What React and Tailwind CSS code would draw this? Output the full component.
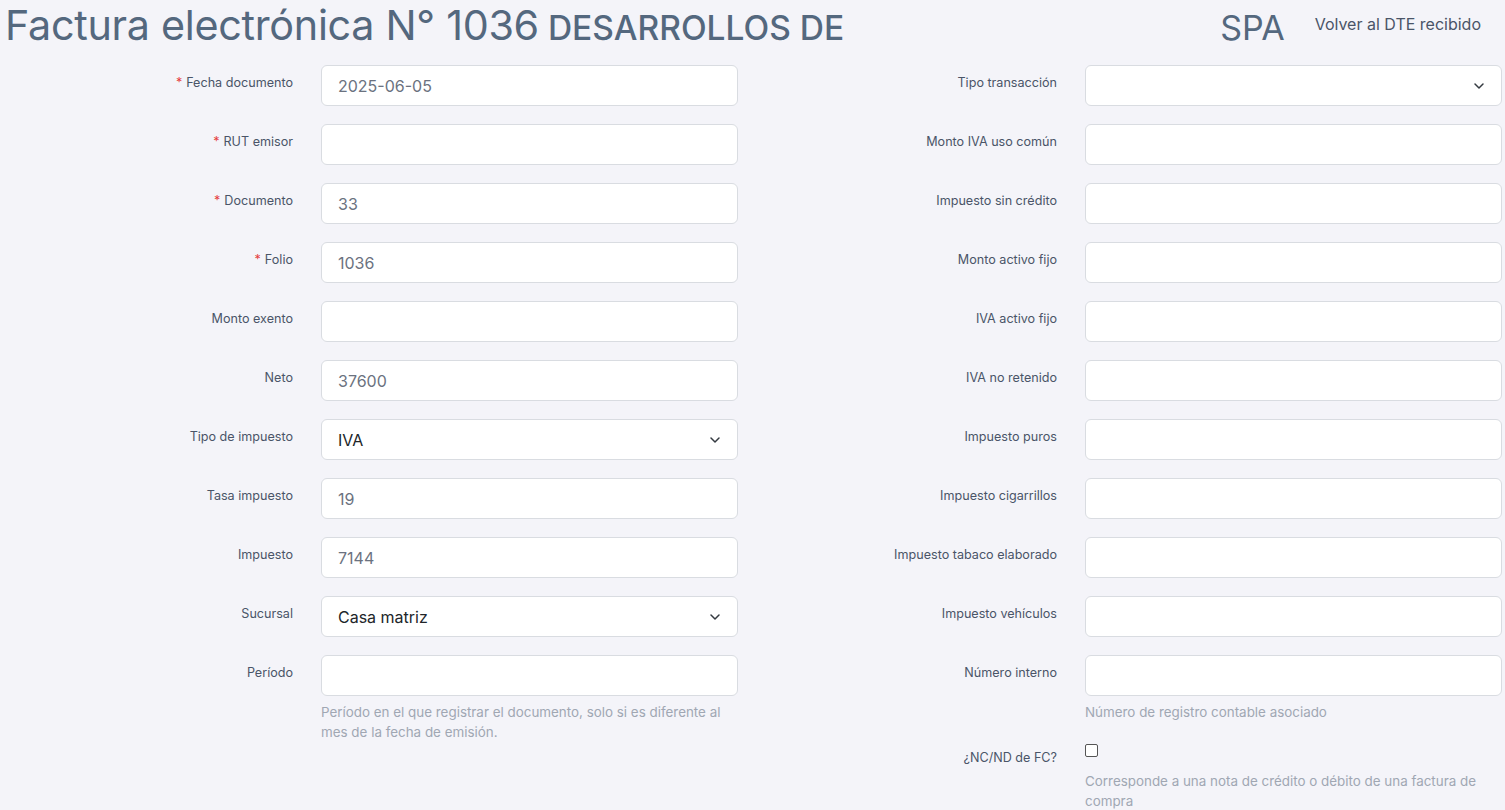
import React from 'react';

const Chevron = () => (
  <svg width="12" height="12" viewBox="0 0 12 12" fill="none" className="shrink-0">
    <path d="M2 4l4 4 4-4" stroke="#343a40" strokeWidth="1.5" strokeLinecap="round" strokeLinejoin="round" />
  </svg>
);

const leftFields = [
  { label: 'Fecha documento', value: '2025-06-05', required: true },
  { label: 'RUT emisor', value: '', required: true },
  { label: 'Documento', value: '33', required: true },
  { label: 'Folio', value: '1036', required: true },
  { label: 'Monto exento', value: '' },
  { label: 'Neto', value: '37600' },
  { label: 'Tipo de impuesto', value: 'IVA', select: true },
  { label: 'Tasa impuesto', value: '19' },
  { label: 'Impuesto', value: '7144' },
  { label: 'Sucursal', value: 'Casa matriz', select: true },
  {
    label: 'Período',
    value: '',
    help: 'Período en el que registrar el documento, solo si es diferente al mes de la fecha de emisión.',
  },
];

const rightFields = [
  { label: 'Tipo transacción', value: '', select: true },
  { label: 'Monto IVA uso común', value: '' },
  { label: 'Impuesto sin crédito', value: '' },
  { label: 'Monto activo fijo', value: '' },
  { label: 'IVA activo fijo', value: '' },
  { label: 'IVA no retenido', value: '' },
  { label: 'Impuesto puros', value: '' },
  { label: 'Impuesto cigarrillos', value: '' },
  { label: 'Impuesto tabaco elaborado', value: '' },
  { label: 'Impuesto vehículos', value: '' },
  { label: 'Número interno', value: '', help: 'Número de registro contable asociado' },
];

const Field = ({ field }) => (
  <div className="flex gap-[28px]">
    <div className="w-[293px] shrink-0 text-right text-[12.6px] leading-[20px] text-[#4a5568] pt-[8px]">
      {field.required && <span className="text-[#e53e3e] mr-1">*</span>}
      {field.label}
    </div>
    <div className="w-[417px] shrink-0">
      <div className="h-[41px] bg-white border border-[#d9dce1] rounded-md flex items-center justify-between pl-4 pr-4">
        <span
          className={
            field.select
              ? 'text-[16px] text-[#212529]'
              : 'text-[16px] text-[#6b7280]'
          }
        >
          {field.value}
        </span>
        {field.select && <Chevron />}
      </div>
      {field.help && (
        <p className="mt-[6px] text-[13.4px] leading-[20px] text-[#a0a7b3]">{field.help}</p>
      )}
    </div>
  </div>
);

export default function App() {
  return (
    <div className="min-h-screen w-[1505px] h-[810px] overflow-hidden bg-[#f4f4f9] font-['Inter',sans-serif]">
      {/* Header */}
      <div className="flex items-baseline h-[65px] pl-[5px] pr-[24px] pt-[1px]">
        <h1 className="text-[41.3px] leading-[48px] text-[#54687e] tracking-[-0.3px] whitespace-nowrap">
          Factura electrónica N° 1036
        </h1>
        <span className="ml-[9px] text-[33.5px] font-medium text-[#54687e] whitespace-nowrap">DESARROLLOS DE</span>
        <span className="flex-1" />
        <span className="text-[34px] text-[#54687e]">SPA</span>
        <span className="ml-[30px] text-[16px] text-[#4a5568] self-start mt-[11px]">Volver al DTE recibido</span>
      </div>

      {/* Form */}
      <div className="flex gap-[26px]">
        <div className="flex flex-col gap-[18px]">
          {leftFields.map((f) => (
            <Field key={f.label} field={f} />
          ))}
        </div>
        <div className="flex flex-col gap-[18px]">
          {rightFields.map((f) => (
            <Field key={f.label} field={f} />
          ))}
          <div className="flex gap-[28px]">
            <div className="w-[293px] shrink-0 text-right text-[12.6px] leading-[20px] text-[#4a5568] pt-[8px]">
              ¿NC/ND de FC?
            </div>
            <div className="w-[417px] shrink-0">
              <div className="pt-[4px] h-[21px]">
                <div className="w-[13px] h-[13px] border border-[#555] rounded-[2px] bg-white" />
              </div>
              <p className="mt-[10px] text-[13.4px] leading-[20px] text-[#a0a7b3]">
                Corresponde a una nota de crédito o débito de una factura de compra
              </p>
            </div>
          </div>
        </div>
      </div>
    </div>
  );
}
